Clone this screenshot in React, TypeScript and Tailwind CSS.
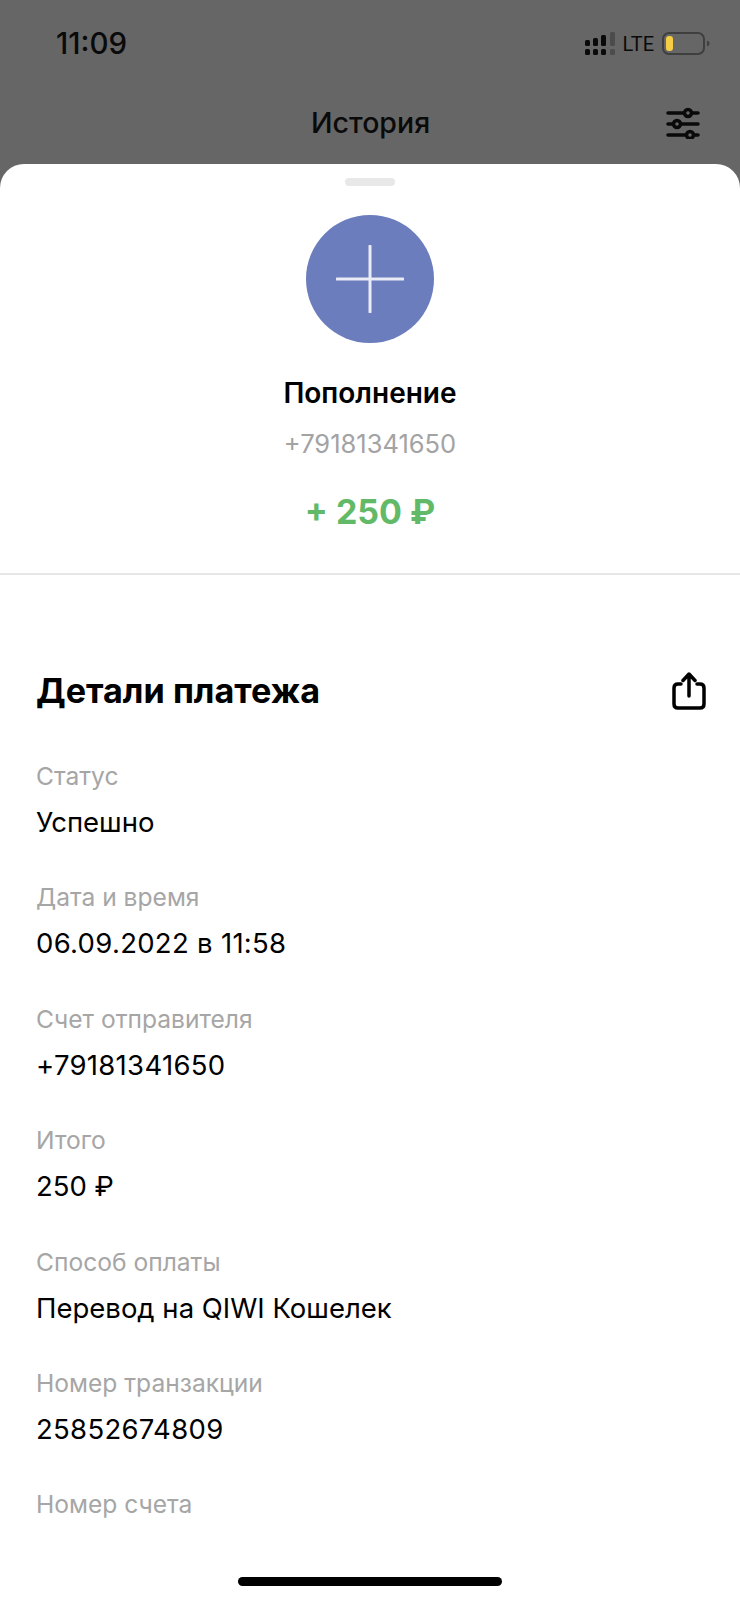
import React from 'react';

const rows = [
  { label: 'Статус', value: 'Успешно', numeric: false },
  { label: 'Дата и время', value: '06.09.2022 в 11:58', numeric: true },
  { label: 'Счет отправителя', value: '+79181341650', numeric: true },
  { label: 'Итого', value: '250 ₽', numeric: false },
  { label: 'Способ оплаты', value: 'Перевод на QIWI Кошелек', numeric: false },
  { label: 'Номер транзакции', value: '25852674809', numeric: true },
  { label: 'Номер счета', value: '', numeric: false },
];

const SignalIcon = () => (
  <svg width="31" height="24" viewBox="0 0 31 24" className="shrink-0">
    <rect x="0" y="8" width="5" height="6" rx="1.5" fill="#0a0a0a" />
    <rect x="8" y="6" width="5" height="8" rx="1.5" fill="#0a0a0a" />
    <rect x="16" y="3" width="5" height="11" rx="1.5" fill="#0a0a0a" />
    <rect x="25" y="0" width="5" height="14" rx="1.5" fill="#4c4c4c" />
    <rect x="0" y="17" width="5" height="6" rx="1.5" fill="#0a0a0a" />
    <rect x="8" y="17" width="5" height="6" rx="1.5" fill="#0a0a0a" />
    <rect x="16" y="17" width="5" height="6" rx="1.5" fill="#0a0a0a" />
    <rect x="25" y="17" width="5" height="6" rx="1.5" fill="#4c4c4c" />
  </svg>
);

const BatteryIcon = () => (
  <svg width="48" height="24" viewBox="0 0 48 24" className="shrink-0">
    <rect x="1" y="1" width="41" height="21" rx="6" fill="none" stroke="#3f3f3f" strokeWidth="2" />
    <rect x="4" y="4" width="7" height="15" rx="3" fill="#f6cd46" />
    <path d="M45 8.5 C47 9.5 47.5 10.5 47.5 11.5 C47.5 12.5 47 13.5 45 14.5 Z" fill="#3f3f3f" />
  </svg>
);

const FilterIcon = () => (
  <svg width="34" height="32" viewBox="0 0 34 32" fill="none" stroke="#0a0a0a" strokeWidth="3.5" strokeLinecap="round">
    <path d="M2 6 H18 M26 6 H32" />
    <circle cx="22" cy="6" r="3.5" />
    <path d="M2 17 H7 M15 17 H32" />
    <circle cx="11" cy="17" r="3.5" />
    <path d="M2 28 H20 M28 28 H32" />
    <circle cx="24" cy="28" r="3.5" />
  </svg>
);

const ShareIcon = () => (
  <svg width="34" height="38" viewBox="0 0 34 38" fill="none" stroke="#000" strokeWidth="3.5" strokeLinecap="round" strokeLinejoin="round">
    <path d="M9 12 H6 Q2 12 2 16 V32 Q2 36 6 36 H28 Q32 36 32 32 V16 Q32 12 28 12 H25" />
    <path d="M17 24 V3 M11 8.5 L17 2 L23 8.5" />
  </svg>
);

export default function App() {
  return (
    <div className="relative w-[740px] h-[1600px] overflow-hidden flex flex-col bg-[#666666] font-['Inter',sans-serif] text-black">
      {/* Status bar */}
      <div className="h-[88px] pl-[56px] pr-[30px] flex items-center justify-between">
        <span className="text-[29.5px] font-medium leading-none text-[#0a0a0a]">11:09</span>
        <div className="flex items-center">
          <SignalIcon />
          <span className="ml-[7px] mr-[8px] text-[20px] leading-none text-[#0a0a0a] font-['Roboto',sans-serif]">LTE</span>
          <BatteryIcon />
        </div>
      </div>

      {/* Header */}
      <div className="h-[76px] pl-[311px] pr-[40px] flex items-center justify-between">
        <span className="text-[28.5px] font-medium leading-none text-[#0a0a0a] pb-[6px]">История</span>
        <div className="pb-[6px]">
          <FilterIcon />
        </div>
      </div>

      {/* Bottom sheet */}
      <div className="flex-1 bg-white rounded-t-[24px] flex flex-col">
        <div className="pt-[14px] flex justify-center">
          <div className="w-[50px] h-[8px] rounded-full bg-[#e8e8e8]" />
        </div>

        <div className="h-[389px] pt-[29px] flex flex-col items-center border-b-2 border-[#e6e6e6]">
          <div className="w-[128px] h-[128px] rounded-full bg-[#6b7dbd] flex items-center justify-center">
            <svg width="68" height="68" viewBox="0 0 68 68" stroke="#e9ecf6" strokeWidth="3" strokeLinecap="round">
              <path d="M34 1 V67 M1 34 H67" />
            </svg>
          </div>
          <div className="mt-[34px] text-[28px] leading-[32px] font-semibold">Пополнение</div>
          <div className="mt-[19px] text-[25.5px] leading-[32px] text-[#a3a3a3]">+79181341650</div>
          <div className="mt-[32px] text-[34px] leading-[40px] font-bold text-[#62b967]">+ 250 ₽</div>
        </div>

        {/* Details */}
        <div className="pl-[36px] pr-[34px]">
          <div className="mt-[86px] flex items-center justify-between h-[60px]">
            <h2 className="text-[34.2px] font-bold leading-none">Детали платежа</h2>
            <ShareIcon />
          </div>
          <div className="mt-[41px] flex flex-col gap-[46.4px]">
            {rows.map((row) => (
              <div key={row.label} className="h-[75px] flex flex-col justify-between">
                <div className="text-[24.6px] leading-[28px] text-[#a6a6a6]">{row.label}</div>
                {row.value && (
                  <div className={`text-[27.5px] leading-[30px] ${row.numeric ? 'tracking-[0.3px]' : ''}`}>{row.value}</div>
                )}
              </div>
            ))}
          </div>
        </div>
      </div>

      {/* Home indicator */}
      <div className="absolute left-[238px] bottom-[14px] w-[264px] h-[9px] rounded-full bg-black" />
    </div>
  );
}
